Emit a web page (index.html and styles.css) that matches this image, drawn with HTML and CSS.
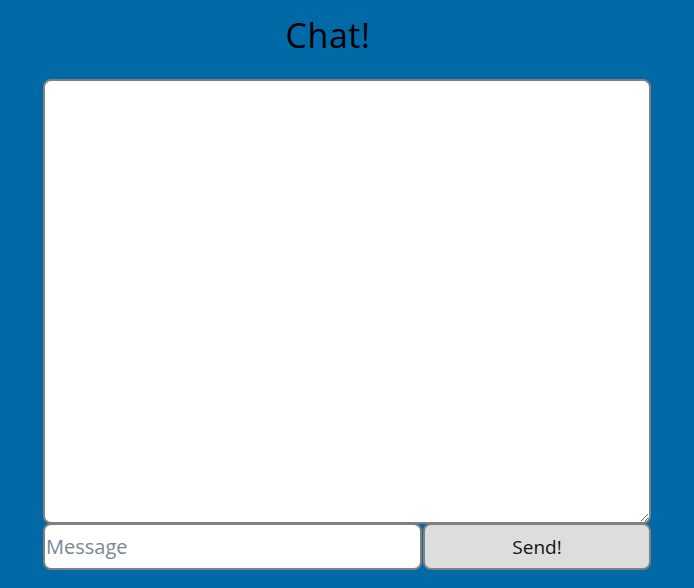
FILE: index.html
```html
<!DOCTYPE html>
<html>
<head>
<meta charset="utf-8">
<link rel="stylesheet" href="styles.css">
</head>
<body>
<div class="page">
  <h1 class="title">Chat!</h1>
  <div class="chat">
    <textarea class="log"></textarea>
    <div class="composer">
      <input class="msg" type="text" placeholder="Message">
      <button class="send">Send!</button>
    </div>
  </div>
</div>
</body>
</html>
```
FILE: styles.css
```css
html, body {
  margin: 0;
  padding: 0;
  background: #0069a6;
  font-family: "Open Sans", "Lato", sans-serif;
}
.page {
  width: 694px;
  height: 588px;
  padding: 0 43px;
  box-sizing: border-box;
}
.title {
  margin: 0;
  height: 79px;
  width: 570px;
  box-sizing: border-box;
  padding-top: 13px;
  text-align: center;
  font-size: 34px;
  font-weight: 400;
  line-height: 44px;
  color: #000;
  letter-spacing: 0.5px;
}
.chat {
  display: flex;
  flex-direction: column;
  width: 608px;
}
.log {
  display: block;
  width: 608px;
  height: 445px;
  box-sizing: border-box;
  margin: 0;
  border: 2px solid #808080;
  border-radius: 8px;
  background: #fff;
  resize: vertical;
}
.composer {
  display: flex;
  gap: 1px;
  margin-top: -1px;
}
.msg {
  width: 379px;
  height: 47px;
  box-sizing: border-box;
  margin: 0;
  border: 2px solid #808080;
  border-radius: 8px;
  padding: 0 0 0 1px;
  font-family: "Open Sans", sans-serif;
  font-size: 20px;
  color: #000;
  background: #fff;
  outline: none;
}
.msg::placeholder {
  color: #7b8790;
}
.send {
  width: 228px;
  height: 47px;
  box-sizing: border-box;
  margin: 0;
  border: 2px solid #808080;
  border-radius: 8px;
  background: #dddddd;
  font-family: "Open Sans", sans-serif;
  font-size: 19px;
  color: #111;
  padding: 0;
}
```
